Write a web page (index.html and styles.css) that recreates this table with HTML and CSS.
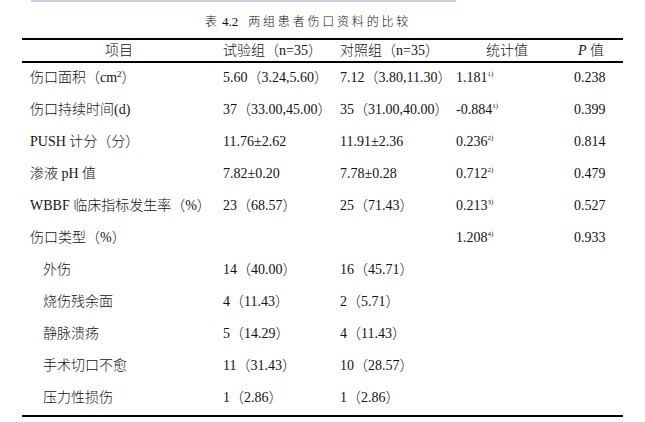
FILE: index.html
```html
<!DOCTYPE html>
<html lang="zh">
<head>
<meta charset="utf-8">
<link rel="stylesheet" href="styles.css">
</head>
<body>
<div class="topbar"></div>
<div class="caption">表<span class="cap-num">4.2</span><span class="cap-text">两组患者伤口资料的比较</span></div>
<table class="data">
  <colgroup>
    <col class="c1"><col class="c2"><col class="c3"><col class="c4"><col class="c5">
  </colgroup>
  <thead>
    <tr>
      <th class="h1">项目</th>
      <th>试验组（n=35）</th>
      <th>对照组（n=35）</th>
      <th class="h4">统计值</th>
      <th class="h5"><i>P</i> 值</th>
    </tr>
  </thead>
  <tbody>
    <tr><td class="lbl">伤口面积（cm<sup class="sq">2</sup>）</td><td>5.60（3.24,5.60）</td><td>7.12（3.80,11.30）</td><td>1.181<sup class="fn">1)</sup></td><td>0.238</td></tr>
    <tr><td class="lbl">伤口持续时间(d)</td><td>37（33.00,45.00）</td><td>35（31.00,40.00）</td><td>-0.884<sup class="fn">1)</sup></td><td>0.399</td></tr>
    <tr><td class="lbl">PUSH 计分（分）</td><td>11.76±2.62</td><td>11.91±2.36</td><td>0.236<sup class="fn">2)</sup></td><td>0.814</td></tr>
    <tr><td class="lbl">渗液 pH 值</td><td>7.82±0.20</td><td>7.78±0.28</td><td>0.712<sup class="fn">2)</sup></td><td>0.479</td></tr>
    <tr><td class="lbl">WBBF 临床指标发生率（%）</td><td>23（68.57）</td><td>25（71.43）</td><td>0.213<sup class="fn">3)</sup></td><td>0.527</td></tr>
    <tr><td class="lbl">伤口类型（%）</td><td></td><td></td><td>1.208<sup class="fn">4)</sup></td><td>0.933</td></tr>
    <tr><td class="sub">外伤</td><td>14（40.00）</td><td>16（45.71）</td><td></td><td></td></tr>
    <tr><td class="sub">烧伤残余面</td><td>4（11.43）</td><td>2（5.71）</td><td></td><td></td></tr>
    <tr><td class="sub">静脉溃疡</td><td>5（14.29）</td><td>4（11.43）</td><td></td><td></td></tr>
    <tr><td class="sub">手术切口不愈</td><td>11（31.43）</td><td>10（28.57）</td><td></td><td></td></tr>
    <tr class="last"><td class="sub">压力性损伤</td><td>1（2.86）</td><td>1（2.86）</td><td></td><td></td></tr>
  </tbody>
</table>
</body>
</html>
```
FILE: styles.css
```css
html, body {
  margin: 0;
  padding: 0;
  background: #ffffff;
}
body {
  font-family: "Liberation Serif", "Noto Sans CJK SC", serif;
  font-weight: 300;
  color: #111111;
  font-size: 14px;
  width: 645px;
  height: 422px;
  overflow: hidden;
}
.topbar {
  margin-left: 31px;
  width: 425px;
  height: 2px;
  background: #c5d3e4;
}
.caption {
  margin-left: 205px;
  margin-top: 12px;
  height: 24px;
  font-size: 12px;
  line-height: 16px;
  color: #111111;
  white-space: nowrap;
}
.cap-num {
  margin-left: 5px;
  font-size: 13px;
}
.cap-text {
  margin-left: 10px;
  letter-spacing: 2.8px;
}
.data {
  margin-left: 22px;
  border-collapse: collapse;
  table-layout: fixed;
  width: 601px;
}
col.c1 { width: 201px; }
col.c2 { width: 117px; }
col.c3 { width: 116px; }
col.c4 { width: 118px; }
col.c5 { width: 49px; }
.data thead th {
  font-weight: 300;
  text-align: left;
  height: 20px;
  padding: 0;
  border-top: 2px solid #000;
  border-bottom: 2px solid #000;
  line-height: 21px;
  white-space: nowrap;
}
.data th.h1 { padding-left: 83px; }
.data th.h4 { padding-left: 30px; }
.data th.h5 { padding-left: 4px; }
.data th i { font-style: italic; }
.data td {
  padding: 0;
  height: 32px;
  line-height: 30px;
  vertical-align: top;
  white-space: nowrap;
  text-align: left;
}
.data td.lbl { padding-left: 8px; }
.data td.sub { padding-left: 21px; }
.data tr.last td {
  border-bottom: 2px solid #000;
}
.data tbody tr:first-child td { line-height: 29px; }
sup.sq {
  font-size: 9px;
  vertical-align: 5px;
  line-height: 0;
}
sup.fn {
  font-size: 7px;
  vertical-align: 6px;
  line-height: 0;
}
```
